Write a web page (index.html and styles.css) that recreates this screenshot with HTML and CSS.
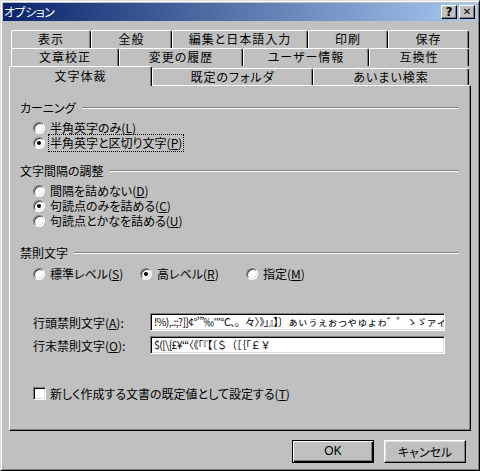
FILE: index.html
```html
<!DOCTYPE html>
<html lang="ja">
<head>
<meta charset="utf-8">
<title>オプション</title>
<link rel="stylesheet" href="styles.css">
</head>
<body>
<div class="window">
  <div class="titlebar">
    <span class="title">オプション</span>
    <div class="tbtns">
      <span class="tbtn">?</span>
      <span class="tbtn close">✕</span>
    </div>
  </div>
  <div class="client">
    <div class="tabs">
      <div class="tabrow r1">
        <div class="tab">表示</div>
        <div class="tab">全般</div>
        <div class="tab">編集と日本語入力</div>
        <div class="tab">印刷</div>
        <div class="tab">保存</div>
      </div>
      <div class="tabrow r2">
        <div class="tab">文章校正</div>
        <div class="tab">変更の履歴</div>
        <div class="tab">ユーザー情報</div>
        <div class="tab">互換性</div>
      </div>
      <div class="tabrow r3">
        <div class="tab active">文字体裁</div>
        <div class="tab">既定のフォルダ</div>
        <div class="tab">あいまい検索</div>
      </div>
    </div>
    <div class="panel">
      <div class="group g1"><span class="gtitle">カーニング</span><span class="gline"></span></div>
      <div class="opt first"><span class="radio"></span><span class="lbl">半角英字のみ(<u>L</u>)</span></div>
      <div class="opt"><span class="radio on"></span><span class="lbl focus">半角英字と区切り文字(<u>P</u>)</span></div>

      <div class="group g2"><span class="gtitle">文字間隔の調整</span><span class="gline"></span></div>
      <div class="opt first"><span class="radio"></span><span class="lbl">間隔を詰めない(<u>D</u>)</span></div>
      <div class="opt"><span class="radio on"></span><span class="lbl">句読点のみを詰める(<u>C</u>)</span></div>
      <div class="opt"><span class="radio"></span><span class="lbl">句読点とかなを詰める(<u>U</u>)</span></div>

      <div class="group g3"><span class="gtitle">禁則文字</span><span class="gline"></span></div>
      <div class="optrow">
        <div class="opt inl w1"><span class="radio"></span><span class="lbl">標準レベル(<u>S</u>)</span></div>
        <div class="opt inl w2"><span class="radio on"></span><span class="lbl">高レベル(<u>R</u>)</span></div>
        <div class="opt inl w3"><span class="radio"></span><span class="lbl">指定(<u>M</u>)</span></div>
      </div>

      <div class="fieldrow f1"><span class="flabel">行頭禁則文字(<u>A</u>):</span><div class="field">!%),.:;?]}¢°’”‰′″℃、。々〉》」』】〕ぁぃぅぇぉっゃゅょゎ゛゜ゝゞァィゥェォッャュョヮヵヶ・ーヽヾ！％），．：；？］｝</div></div>
      <div class="fieldrow f2"><span class="flabel">行末禁則文字(<u>O</u>):</span><div class="field">$([\{£¥‘“〈《「『【〔＄（［｛｢￡￥</div></div>

      <div class="chkrow"><span class="chk"></span><span class="lbl">新しく作成する文書の既定値として設定する(<u>T</u>)</span></div>
    </div>
    <div class="buttons">
      <div class="btn default"><span>OK</span></div>
      <div class="btn">キャンセル</div>
    </div>
  </div>
</div>
</body>
</html>
```
FILE: styles.css
```css
* { box-sizing: border-box; }
html, body { margin: 0; padding: 0; }
body {
  width: 480px;
  height: 471px;
  background: #c0c0c0;
  font-family: "Noto Sans CJK JP", "Liberation Sans", sans-serif;
  font-size: 12px;
  color: #000;
  font-feature-settings: "palt";
}
u { text-decoration: underline; text-underline-offset: 1px; }

.window {
  width: 480px;
  height: 471px;
  background: #c0c0c0;
  border: 1px solid;
  border-color: #dfdfdf #000 #000 #dfdfdf;
  box-shadow: inset 1px 1px #fff, inset -1px -1px #808080;
  padding: 2px;
  display: flex;
  flex-direction: column;
}

.titlebar {
  height: 18px;
  background: linear-gradient(to right, #0a246a, #a6caf0);
  display: flex;
  align-items: center;
  justify-content: space-between;
  padding: 0 2px 0 1px;
}
.title {
  color: #fff;
  font-size: 12px;
  line-height: 18px;
  letter-spacing: -0.5px;
}
.tbtns { display: flex; gap: 2px; }
.tbtn {
  width: 16px;
  height: 14px;
  background: #c0c0c0;
  border: 1px solid;
  border-color: #fff #000 #000 #fff;
  box-shadow: inset -1px -1px #808080;
  font-family: "DejaVu Sans", sans-serif;
  font-weight: bold;
  font-size: 12px;
  line-height: 12px;
  text-align: center;
  color: #000;
}
.tbtn.close { font-size: 10px; line-height: 12px; font-weight: bold; }

.client {
  flex: 1;
  padding: 9px 6px 0 6px;
  display: flex;
  flex-direction: column;
}

.tabs { display: flex; flex-direction: column; }
.tabrow { display: grid; }
.r1 { height: 18px; padding: 0 2px; grid-template-columns: 80px 81px 136px 80px 81px; }
.r2 { height: 18px; padding: 0 2px; grid-template-columns: 108px 124px 126px 100px; }
.r3 { height: 19px; padding: 0 2px 0 0; grid-template-columns: 143px 161px 156px; align-items: end; }

.tab {
  height: 18px;
  background: #c0c0c0;
  border-top: 1px solid #fff;
  border-left: 1px solid #fff;
  border-right: 1px solid #000;
  box-shadow: inset -1px 0 #808080;
  border-radius: 2px 3px 0 0;
  text-align: center;
  line-height: 16px;
  letter-spacing: 1px;
  white-space: nowrap;
  overflow: hidden;
}
.r3 .tab { height: 17px; }
.r3 .tab.active {
  height: 20px;
  margin-bottom: -1px;
  position: relative;
  z-index: 1;
  line-height: 18px;
}

.panel {
  height: 346px;
  border: 1px solid;
  border-color: #fff #000 #000 #fff;
  box-shadow: inset -1px -1px #808080;
  padding: 0 12px 0 10px;
  display: flex;
  flex-direction: column;
}

.group {
  display: flex;
  align-items: center;
  height: 15px;
  line-height: 15px;
}
.g1 { margin-top: 14px; }
.g2 { margin-top: 13px; }
.g3 { margin-top: 17px; }
.gline {
  flex: 1;
  margin-left: 6px;
  height: 2px;
  border-top: 1px solid #808080;
  border-bottom: 1px solid #fff;
}

.opt {
  display: flex;
  align-items: center;
  height: 15px;
  padding-left: 13px;
  gap: 5px;
  white-space: nowrap;
}
.opt.first { margin-top: 5px; }
.optrow { display: flex; margin-top: 6px; }
.opt.w1 { width: 120px; }
.opt.w2 { width: 106px; padding-left: 0; }
.opt.w3 { padding-left: 0; }

.radio {
  width: 12px;
  height: 12px;
  border-radius: 50%;
  background: #fff;
  border: 1px solid;
  border-color: #808080 #fff #fff #808080;
  box-shadow: inset 1px 1px #404040, inset -1px -1px #dfdfdf;
  position: relative;
  flex: none;
}
.radio.on::after {
  content: "";
  position: absolute;
  left: 3px;
  top: 3px;
  width: 4px;
  height: 4px;
  border-radius: 50%;
  background: #000;
}
.lbl { line-height: 14px; }
.lbl.focus {
  outline: 1px dotted #000;
  outline-offset: 1px;
}

.fieldrow {
  display: flex;
  align-items: center;
  height: 18px;
  padding-left: 13px;
}
.f1 { margin-top: 32px; }
.f2 { margin-top: 5px; }
.flabel { width: 117px; flex: none; white-space: nowrap; }
.field {
  width: 295px;
  height: 18px;
  background: #fff;
  border: 1px solid;
  border-color: #808080 #fff #fff #808080;
  box-shadow: inset 1px 1px #000, inset -1px -1px #dfdfdf;
  font-size: 10.5px;
  line-height: 16px;
  padding: 0 3px;
  white-space: nowrap;
  overflow: hidden;
  font-feature-settings: normal;
  letter-spacing: -0.6px;
}

.chkrow {
  display: flex;
  align-items: center;
  height: 15px;
  margin-top: 32px;
  padding-left: 13px;
  gap: 4px;
  white-space: nowrap;
}
.chk {
  width: 13px;
  height: 13px;
  background: #fff;
  border: 1px solid;
  border-color: #808080 #fff #fff #808080;
  box-shadow: inset 1px 1px #000, inset -1px -1px #dfdfdf;
  flex: none;
}

.buttons {
  display: flex;
  justify-content: flex-end;
  gap: 10px;
  margin-top: 9px;
  padding-right: 5px;
}
.btn {
  width: 82px;
  height: 23px;
  background: #c0c0c0;
  border: 1px solid;
  border-color: #fff #000 #000 #fff;
  box-shadow: inset -1px -1px #808080, inset 1px 1px #dfdfdf;
  text-align: center;
  line-height: 21px;
}
.btn.default {
  border: 1px solid #000;
  box-shadow: inset 1px 1px #fff, inset -1px -1px #000, inset -2px -2px #808080;
  font-family: "Liberation Sans", sans-serif;
}
```
